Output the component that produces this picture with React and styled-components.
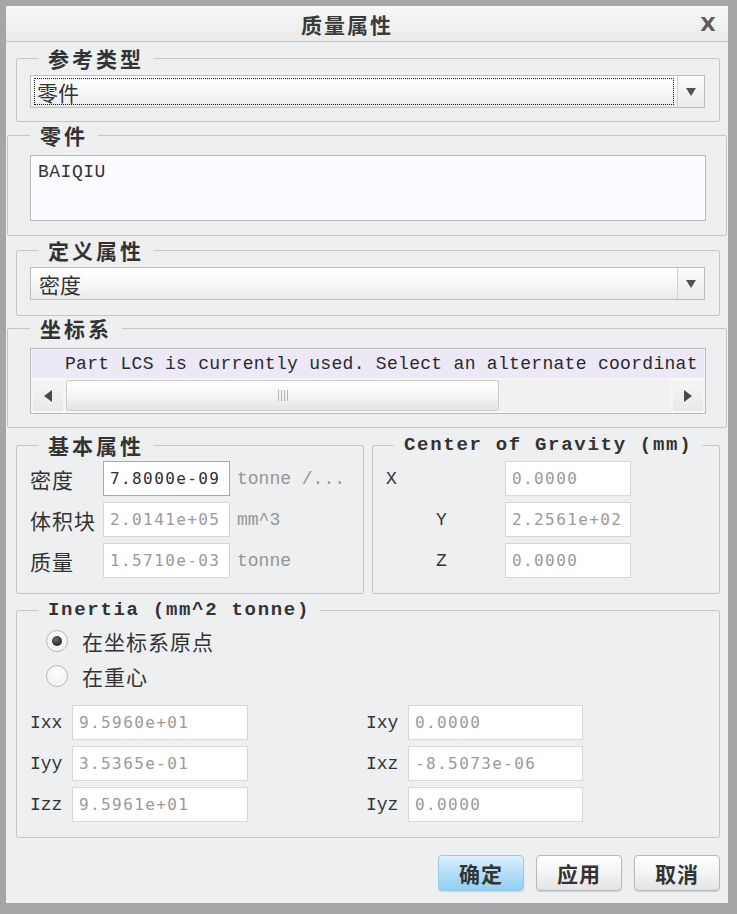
import React from 'react'
import styled, {createGlobalStyle} from 'styled-components'

const GlobalStyle = createGlobalStyle`
  html, body {
    margin: 0;
    padding: 0;
    background: #a6a6a6;
  }
  body {
    font-family: "Noto Sans CJK SC", "Noto Sans", sans-serif;
    color: #333;
  }
  * {
    box-sizing: border-box;
  }
`

const CJK = '"Noto Sans CJK SC", "Noto Sans", sans-serif'
const MONO = '"Liberation Mono", "DejaVu Sans Mono", monospace'
const NUM = '"DejaVu Sans Mono", "Liberation Mono", monospace'

// Dialog frame
const Dialog = styled.div`
  width: 737px;
  height: 914px;
  border-style: solid;
  border-color: #a6a6a6;
  border-width: 6px 9px 11px 6px;
  background: #eeeff0;
  display: flex;
  flex-direction: column;
`

const TitleBar = styled.div`
  height: 36px;
  display: flex;
  align-items: center;
  background: linear-gradient(#f7f7f7, #ebebeb);
  border-bottom: 1px solid #c4c4c4;
`

const Title = styled.div`
  flex: 1;
  text-align: center;
  font-family: ${CJK};
  font-weight: 700;
  font-size: 21px;
  letter-spacing: 2px;
  color: #3a3a3a;
`

const Close = styled.div`
  width: 40px;
  text-align: center;
  font-family: "DejaVu Sans", sans-serif;
  font-weight: 700;
  font-size: 20px;
  color: #5c5c5c;
`

// Groups (etched frames with a caption)
const Group = styled.fieldset`
  margin: ${p => p.$mt || 0}px ${p => (p.$wide ? 1 : 8)}px 0 ${p => (p.$wide ? 1 : 10)}px;
  padding: ${p => p.$pt || 0}px ${p => (p.$wide ? 20 : 14)}px ${p => p.$pb || 0}px ${p => (p.$wide ? 22 : 13)}px;
  border: 1px solid #c6c6c6;
  border-radius: 2px;
  min-inline-size: 0;
  min-width: 0;
`

const Legend = styled.legend`
  margin-left: ${p => (p.$wide ? 0 : 8)}px;
  padding: 0 10px;
  height: 24px;
  line-height: 24px;
  font-family: ${p => (p.$latin ? MONO : CJK)};
  font-weight: 700;
  font-size: ${p => (p.$latin ? 19 : 21)}px;
  letter-spacing: ${p => (p.$latin ? 1.7 : 3)}px;
  color: #333;
  white-space: nowrap;
`

const SideBySide = styled.div`
  display: flex;
  gap: 8px;
  margin: 5px 8px 0 10px;

  & > fieldset {
    flex: 1;
    margin: 0;
  }
`

// Drop-down
const Select = styled.div`
  display: flex;
  height: 33px;
  border: 1px solid #bdbdbd;
  background: linear-gradient(#ffffff, #f6f6f6 55%, #eaeaea);
`

const SelectValue = styled.div`
  flex: 1;
  display: flex;
  padding: 2px 3px;
  font-family: ${CJK};
  font-size: 21px;
  color: #333;
`

const ValueText = styled.span`
  flex: 1;
  display: flex;
  align-items: center;
  padding-left: ${p => (p.$focus ? 2 : 4)}px;
  border: 1px dotted ${p => (p.$focus ? '#1a1a1a' : 'transparent')};
`

const ArrowBtn = styled.div`
  width: 27px;
  display: flex;
  align-items: center;
  justify-content: center;
  border-left: 1px solid #d2d2d2;
  background: linear-gradient(#fafafa, #ececec);
`

const Triangle = ({dir = 'down', color = '#505050'}) => {
  const pts = {
    down: '0,0 10,0 5,8',
    left: '8,0 8,12 0,6',
    right: '0,0 0,12 8,6',
  }[dir]
  const box = dir === 'down' ? '0 0 10 8' : '0 0 8 12'
  return (
    <svg width={dir === 'down' ? 10 : 8} height={dir === 'down' ? 8 : 12} viewBox={box}>
      <polygon points={pts} fill={color} />
    </svg>
  )
}

// Text areas / list
const TextBox = styled.div`
  height: 66px;
  border: 1px solid #b9b9b9;
  background: #fbfaff;
  padding: 6px 7px;
  font-family: ${MONO};
  font-size: 18px;
  letter-spacing: 0.5px;
  color: #333;
`

const ListBox = styled.div`
  height: 66px;
  border: 1px solid #b9b9b9;
  background: #f6f6f6;
  display: flex;
  flex-direction: column;
`

const ListRow = styled.div`
  height: 28px;
  margin: 1px 1px 0;
  padding-left: 33px;
  display: flex;
  align-items: center;
  background: #ece8f5;
  font-family: ${MONO};
  font-size: 18px;
  letter-spacing: 0.3px;
  color: #2a2a2a;
  white-space: nowrap;
`

const ScrollBar = styled.div`
  flex: 1;
  display: flex;
  padding: 2px;
  gap: 3px;
`

const ScrollBtn = styled.div`
  width: 30px;
  display: flex;
  align-items: center;
  justify-content: center;
  background: linear-gradient(#f5f5f5, #e9e9e9);
`

const Track = styled.div`
  flex: 1;
  display: flex;
  background: #f1f1f1;
`

const Thumb = styled.div`
  width: ${p => p.$w}px;
  border: 1px solid #cdcdcd;
  border-radius: 2px;
  background: linear-gradient(#ffffff, #f5f5f5 50%, #e4e4e4);
  display: flex;
  align-items: center;
  justify-content: center;
`

const Grip = styled.div`
  width: 10px;
  height: 11px;
  background: repeating-linear-gradient(90deg, #b4b4b4 0 1px, transparent 1px 3px);
`

// Property grids
const PropGrid = styled.div`
  display: grid;
  grid-template-columns: ${p => p.$cols};
  grid-auto-rows: 35px;
  row-gap: 6px;
  align-items: center;
`

const Label = styled.div`
  font-family: ${p => (p.$latin ? MONO : CJK)};
  font-size: ${p => (p.$latin ? 18 : 21)}px;
  letter-spacing: ${p => (p.$latin ? 0 : 1)}px;
  padding-left: ${p => p.$indent || 0}px;
  color: #333;
  white-space: nowrap;
`

const Field = styled.div`
  height: 35px;
  display: flex;
  align-items: center;
  padding-left: 6px;
  background: #fff;
  border: 1px solid ${p => (p.$active ? '#a9a9a9' : '#d8d8d8')};
  font-family: ${NUM};
  font-size: 16px;
  letter-spacing: 1.4px;
  color: ${p => (p.$active ? '#2e2e2e' : '#9a9a9a')};
  white-space: nowrap;
`

const Unit = styled.div`
  padding-left: 7px;
  font-family: ${MONO};
  font-size: 18px;
  color: #959595;
  white-space: nowrap;
`

// Radios
const RadioRow = styled.div`
  height: 35px;
  display: flex;
  align-items: center;
  gap: 14px;
  padding-left: 16px;
  font-family: ${CJK};
  font-size: 21px;
  letter-spacing: 1px;
  color: #333;
`

const RadioDot = styled.span`
  width: 22px;
  height: 22px;
  border-radius: 50%;
  border: 1px solid #b9b9b9;
  background: radial-gradient(circle at 50% 35%, #ffffff, #ececec);
  box-shadow: inset 0 0 0 2px #f7f7f7;
  display: flex;
  align-items: center;
  justify-content: center;

  &::after {
    content: '';
    width: 10px;
    height: 10px;
    border-radius: 50%;
    background: radial-gradient(circle at 40% 35%, #6a6a6a, #151515);
    display: ${p => (p.$checked ? 'block' : 'none')};
  }
`

const InertiaGrid = styled(PropGrid)`
  margin-top: 12px;
`

// Buttons
const ButtonBar = styled.div`
  display: flex;
  justify-content: flex-end;
  gap: 12px;
  margin: 17px 8px 0 0;
`

const Button = styled.button`
  width: 86px;
  height: 36px;
  border-radius: 4px;
  border: 1px solid ${p => (p.$primary ? '#9ccae6' : '#b8b8b8')};
  background: ${p =>
    p.$primary
      ? 'linear-gradient(#dcf0fc, #b5def7 50%, #92cff3)'
      : 'linear-gradient(#ffffff, #f4f4f4 50%, #e3e3e3)'};
  box-shadow: 0 1px 1px rgba(0, 0, 0, 0.12);
  font-family: ${CJK};
  font-weight: 700;
  font-size: 21px;
  letter-spacing: 1px;
  color: #333;
  padding: 0;
`

const basic = [
  {label: '密度', value: '7.8000e-09', unit: 'tonne /...', active: true},
  {label: '体积块', value: '2.0141e+05', unit: 'mm^3'},
  {label: '质量', value: '1.5710e-03', unit: 'tonne'},
]

const gravity = [
  {label: 'X', value: '0.0000', indent: 0},
  {label: 'Y', value: '2.2561e+02', indent: 50},
  {label: 'Z', value: '0.0000', indent: 50},
]

const inertia = [
  ['Ixx', '9.5960e+01', 'Ixy', '0.0000'],
  ['Iyy', '3.5365e-01', 'Ixz', '-8.5073e-06'],
  ['Izz', '9.5961e+01', 'Iyz', '0.0000'],
]

export default function App() {
  return (
    <>
      <GlobalStyle />
      <Dialog>
        <TitleBar>
          <Title>质量属性</Title>
          <Close>X</Close>
        </TitleBar>

        <Group $mt={4} $pt={5} $pb={13}>
          <Legend>参考类型</Legend>
          <Select>
            <SelectValue>
              <ValueText $focus>零件</ValueText>
            </SelectValue>
            <ArrowBtn><Triangle /></ArrowBtn>
          </Select>
        </Group>

        <Group $wide $mt={1} $pt={8} $pb={14}>
          <Legend $wide>零件</Legend>
          <TextBox>BAIQIU</TextBox>
        </Group>

        <Group $mt={2} $pt={5} $pb={15}>
          <Legend>定义属性</Legend>
          <Select>
            <SelectValue>
              <ValueText>密度</ValueText>
            </SelectValue>
            <ArrowBtn><Triangle /></ArrowBtn>
          </Select>
        </Group>

        <Group $wide $pt={8} $pb={13}>
          <Legend $wide>坐标系</Legend>
          <ListBox>
            <ListRow>Part LCS is currently used. Select an alternate coordinat</ListRow>
            <ScrollBar>
              <ScrollBtn><Triangle dir="left" color="#4a4a4a" /></ScrollBtn>
              <Track>
                <Thumb $w={433}><Grip /></Thumb>
              </Track>
              <ScrollBtn><Triangle dir="right" color="#4a4a4a" /></ScrollBtn>
            </ScrollBar>
          </ListBox>
        </Group>

        <SideBySide>
          <Group $pt={4} $pb={15}>
            <Legend>基本属性</Legend>
            <PropGrid $cols="73px 127px auto">
              {basic.map(row => (
                <React.Fragment key={row.label}>
                  <Label>{row.label}</Label>
                  <Field $active={row.active}>{row.value}</Field>
                  <Unit>{row.unit}</Unit>
                </React.Fragment>
              ))}
            </PropGrid>
          </Group>
          <Group $pt={4} $pb={15}>
            <Legend $latin>Center of Gravity (mm)</Legend>
            <PropGrid $cols="119px 126px">
              {gravity.map(row => (
                <React.Fragment key={row.label}>
                  <Label $latin $indent={row.indent}>{row.label}</Label>
                  <Field>{row.value}</Field>
                </React.Fragment>
              ))}
            </PropGrid>
          </Group>
        </SideBySide>

        <Group $mt={4} $pt={1} $pb={15}>
          <Legend $latin>Inertia (mm^2 tonne)</Legend>
          <RadioRow><RadioDot $checked />在坐标系原点</RadioRow>
          <RadioRow><RadioDot />在重心</RadioRow>
          <InertiaGrid $cols="42px 176px 118px 42px 175px">
            {inertia.map(([a, av, b, bv]) => (
              <React.Fragment key={a}>
                <Label $latin>{a}</Label>
                <Field>{av}</Field>
                <span />
                <Label $latin>{b}</Label>
                <Field>{bv}</Field>
              </React.Fragment>
            ))}
          </InertiaGrid>
        </Group>

        <ButtonBar>
          <Button $primary>确定</Button>
          <Button>应用</Button>
          <Button>取消</Button>
        </ButtonBar>
      </Dialog>
    </>
  )
}
